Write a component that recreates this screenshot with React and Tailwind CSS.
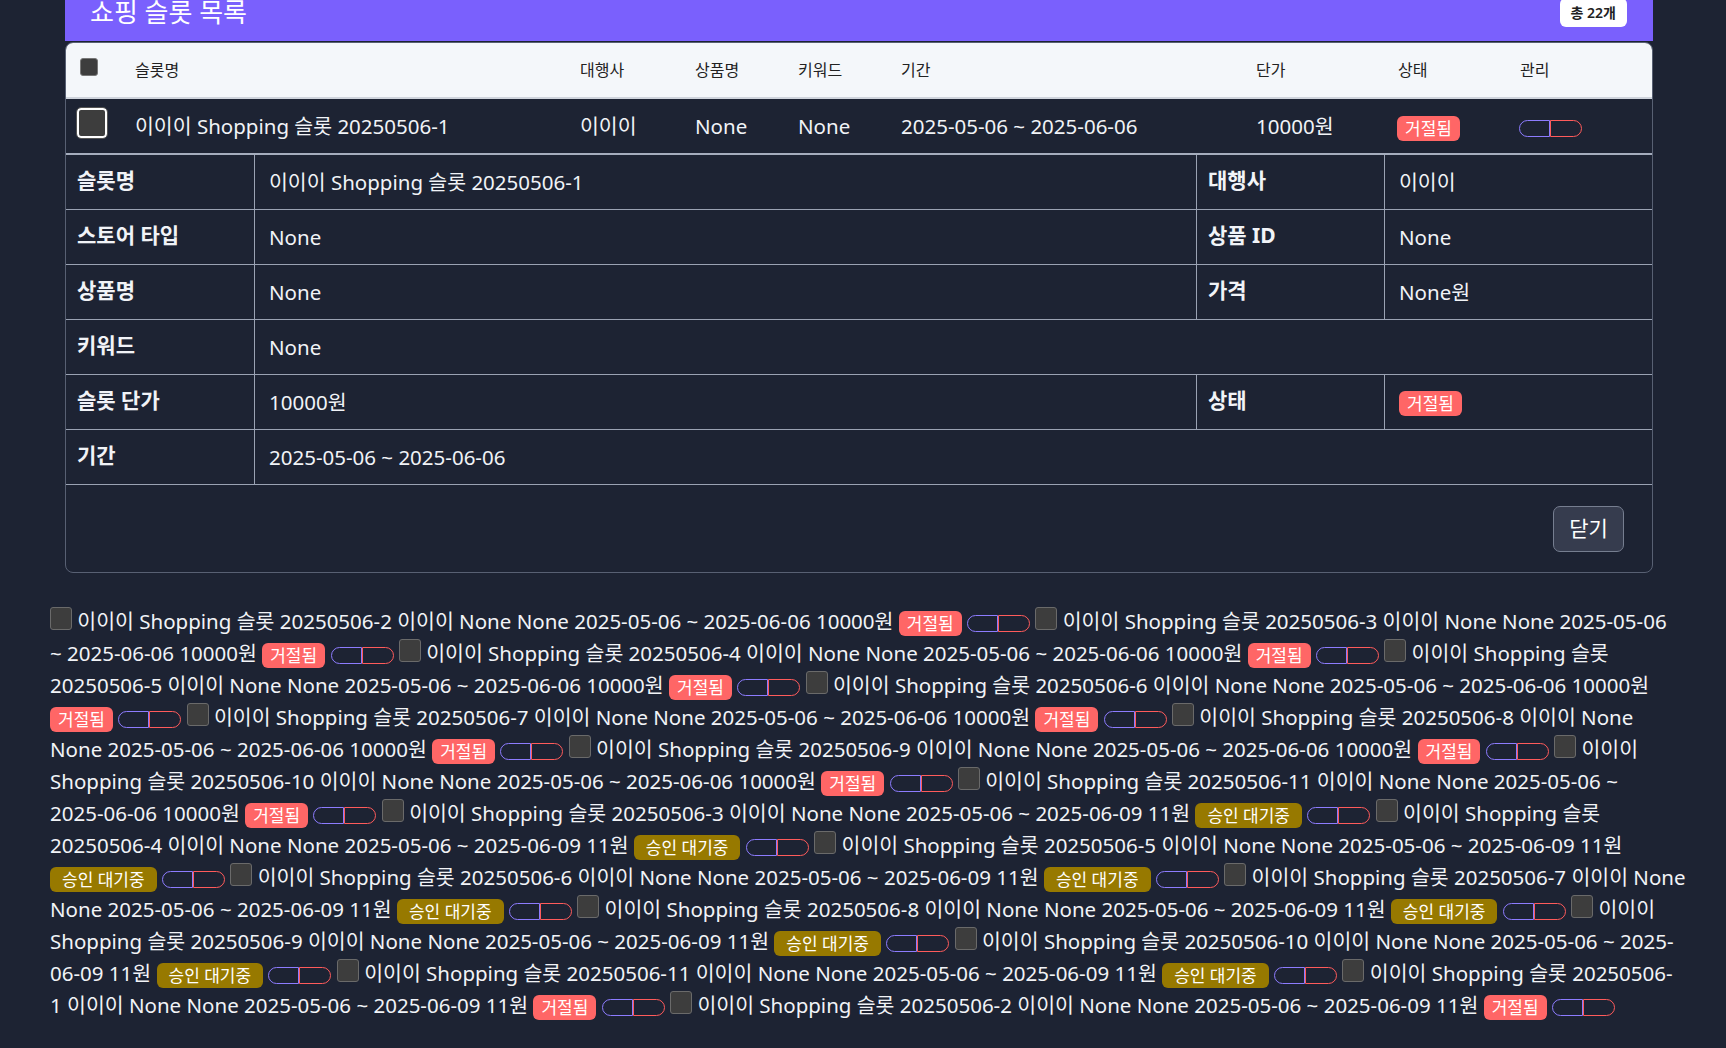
import { Fragment } from 'react';

const FONT = "font-['Noto_Sans','Noto_Sans_CJK_KR',sans-serif]";

const cols = 'grid grid-cols-[54px_445px_115px_103px_103px_355px_142px_122px_149px]';

// 테이블 밖으로 흘러나온 나머지 행들 (줄 단위)
const lines = [
  [['cb'], ['t', '이이이 Shopping 슬롯 20250506-2 이이이 None None 2025-05-06 ~ 2025-06-06 10000원'], ['rej'], ['tog'], ['cb'], ['t', '이이이 Shopping 슬롯 20250506-3 이이이 None None 2025-05-06']],
  [['t', '~ 2025-06-06 10000원'], ['rej'], ['tog'], ['cb'], ['t', '이이이 Shopping 슬롯 20250506-4 이이이 None None 2025-05-06 ~ 2025-06-06 10000원'], ['rej'], ['tog'], ['cb'], ['t', '이이이 Shopping 슬롯']],
  [['t', '20250506-5 이이이 None None 2025-05-06 ~ 2025-06-06 10000원'], ['rej'], ['tog'], ['cb'], ['t', '이이이 Shopping 슬롯 20250506-6 이이이 None None 2025-05-06 ~ 2025-06-06 10000원']],
  [['rej'], ['tog'], ['cb'], ['t', '이이이 Shopping 슬롯 20250506-7 이이이 None None 2025-05-06 ~ 2025-06-06 10000원'], ['rej'], ['tog'], ['cb'], ['t', '이이이 Shopping 슬롯 20250506-8 이이이 None']],
  [['t', 'None 2025-05-06 ~ 2025-06-06 10000원'], ['rej'], ['tog'], ['cb'], ['t', '이이이 Shopping 슬롯 20250506-9 이이이 None None 2025-05-06 ~ 2025-06-06 10000원'], ['rej'], ['tog'], ['cb'], ['t', '이이이']],
  [['t', 'Shopping 슬롯 20250506-10 이이이 None None 2025-05-06 ~ 2025-06-06 10000원'], ['rej'], ['tog'], ['cb'], ['t', '이이이 Shopping 슬롯 20250506-11 이이이 None None 2025-05-06 ~']],
  [['t', '2025-06-06 10000원'], ['rej'], ['tog'], ['cb'], ['t', '이이이 Shopping 슬롯 20250506-3 이이이 None None 2025-05-06 ~ 2025-06-09 11원'], ['wait'], ['tog'], ['cb'], ['t', '이이이 Shopping 슬롯']],
  [['t', '20250506-4 이이이 None None 2025-05-06 ~ 2025-06-09 11원'], ['wait'], ['tog'], ['cb'], ['t', '이이이 Shopping 슬롯 20250506-5 이이이 None None 2025-05-06 ~ 2025-06-09 11원']],
  [['wait'], ['tog'], ['cb'], ['t', '이이이 Shopping 슬롯 20250506-6 이이이 None None 2025-05-06 ~ 2025-06-09 11원'], ['wait'], ['tog'], ['cb'], ['t', '이이이 Shopping 슬롯 20250506-7 이이이 None']],
  [['t', 'None 2025-05-06 ~ 2025-06-09 11원'], ['wait'], ['tog'], ['cb'], ['t', '이이이 Shopping 슬롯 20250506-8 이이이 None None 2025-05-06 ~ 2025-06-09 11원'], ['wait'], ['tog'], ['cb'], ['t', '이이이']],
  [['t', 'Shopping 슬롯 20250506-9 이이이 None None 2025-05-06 ~ 2025-06-09 11원'], ['wait'], ['tog'], ['cb'], ['t', '이이이 Shopping 슬롯 20250506-10 이이이 None None 2025-05-06 ~ 2025-']],
  [['t', '06-09 11원'], ['wait'], ['tog'], ['cb'], ['t', '이이이 Shopping 슬롯 20250506-11 이이이 None None 2025-05-06 ~ 2025-06-09 11원'], ['wait'], ['tog'], ['cb'], ['t', '이이이 Shopping 슬롯 20250506-']],
  [['t', '1 이이이 None None 2025-05-06 ~ 2025-06-09 11원'], ['rej'], ['tog'], ['cb'], ['t', '이이이 Shopping 슬롯 20250506-2 이이이 None None 2025-05-06 ~ 2025-06-09 11원'], ['rej'], ['tog']],
];

function Toggle() {
  return (
    <span className="inline-flex align-middle">
      <span className="w-[31px] h-[17px] border border-[#8d7cff] rounded-l-full" />
      <span className="w-[32px] h-[17px] border border-[#ff5b5b] rounded-r-full" />
    </span>
  );
}

function Badge({ kind, className = '' }) {
  if (kind === 'wait') {
    return <span className={`inline-block align-middle bg-[#977900] text-white text-[17px] leading-[25px] px-[12px] rounded-[6px] ${className}`}>승인 대기중</span>;
  }
  return <span className={`inline-block align-middle bg-[#ff6666] text-white text-[17px] leading-[25px] px-[8px] rounded-[6px] ${className}`}>거절됨</span>;
}

function InlineBox() {
  return <span className="inline-block align-baseline w-[22px] h-[23px] bg-[#3d3d3d] border-[1.5px] border-[#6a6a6a] rounded-[3px] translate-y-[1px]" />;
}

function Piece({ p, last }) {
  const sp = last ? '' : ' ';
  if (p[0] === 't') return <>{p[1]}{sp}</>;
  if (p[0] === 'cb') return <><InlineBox />{sp}</>;
  if (p[0] === 'tog') return <><Toggle />{sp}</>;
  return <><Badge kind={p[0]} />{sp}</>;
}

function DetailLabel({ children }) {
  return <div className="px-[11px] pt-[12px] font-bold text-[21px] leading-[26px] border-r border-[#9aa2b3]">{children}</div>;
}

function DetailValue({ children, border = true }) {
  return <div className={`px-[14px] flex items-center text-[20.5px] ${border ? 'border-r border-[#9aa2b3]' : ''}`}>{children}</div>;
}

export default function App() {
  return (
    <div className={`min-h-screen bg-[#1d2333] text-[#f1f3f7] px-[50px] overflow-hidden ${FONT}`}>
      <div className="ml-[15px] mr-[23px] -mt-[27px]">
        {/* 헤더 */}
        <div className="h-[68px] bg-[#7a60fd] flex items-center justify-between pt-[10px] pl-[25px] pr-[26px]">
          <h2 className="text-[26px] leading-9 text-white">쇼핑 슬롯 목록</h2>
          <span className="bg-white text-[#222] text-[14px] font-semibold px-[11px] py-[4px] rounded-md">총 22개</span>
        </div>

        <div className="mt-px border border-[#586073] rounded-lg overflow-hidden">
          {/* 테이블 헤더 */}
          <div className={`${cols} h-[56px] bg-[#f4f7fa] text-[#222] text-[16px] items-center border-b-2 border-[#cfd4dc]`}>
            <div className="pl-[14px]">
              <span className="block w-[18px] h-[18px] bg-[#3d3d3d] border border-[#777] rounded-[3px] -mt-[6px]" />
            </div>
            {['슬롯명', '대행사', '상품명', '키워드', '기간', '단가', '상태', '관리'].map((h) => (
              <div key={h} className="pl-[15px]">{h}</div>
            ))}
          </div>

          {/* 선택된 행 */}
          <div className={`${cols} h-[56px] items-center text-[20.5px] border-b-2 border-[#a5adbd]`}>
            <div className="pl-[11px]">
              <span className="block w-[30px] h-[30px] bg-[#3d3d3d] border-2 border-white rounded-[4px] outline outline-1 outline-[#555] -mt-[6px]" />
            </div>
            <div className="pl-[15px]">이이이 Shopping 슬롯 20250506-1</div>
            <div className="pl-[15px]">이이이</div>
            <div className="pl-[15px]">None</div>
            <div className="pl-[15px]">None</div>
            <div className="pl-[15px]">2025-05-06 ~ 2025-06-06</div>
            <div className="pl-[15px]">10000원</div>
            <div className="pl-[14px]"><Badge kind="rej" /></div>
            <div className="pl-[14px]"><Toggle /></div>
          </div>

          {/* 상세 정보 */}
          <div className="grid grid-cols-[189px_942px_188px_1fr] auto-rows-[55px] [&>div]:border-b [&>div]:border-[#9aa2b3]">
            <DetailLabel>슬롯명</DetailLabel>
            <DetailValue>이이이 Shopping 슬롯 20250506-1</DetailValue>
            <DetailLabel>대행사</DetailLabel>
            <DetailValue border={false}>이이이</DetailValue>

            <DetailLabel>스토어 타입</DetailLabel>
            <DetailValue>None</DetailValue>
            <DetailLabel>상품 ID</DetailLabel>
            <DetailValue border={false}>None</DetailValue>

            <DetailLabel>상품명</DetailLabel>
            <DetailValue>None</DetailValue>
            <DetailLabel>가격</DetailLabel>
            <DetailValue border={false}>None원</DetailValue>

            <DetailLabel>키워드</DetailLabel>
            <div className="col-span-3 px-[14px] flex items-center text-[20.5px]">None</div>

            <DetailLabel>슬롯 단가</DetailLabel>
            <DetailValue>10000원</DetailValue>
            <DetailLabel>상태</DetailLabel>
            <DetailValue border={false}><Badge kind="rej" className="mt-[2px]" /></DetailValue>

            <DetailLabel>기간</DetailLabel>
            <div className="col-span-3 px-[14px] flex items-center text-[20.5px]">2025-05-06 ~ 2025-06-06</div>
          </div>

          {/* 푸터 */}
          <div className="flex justify-end pt-[21px] pb-[20px] pr-[28px]">
            <button className="w-[71px] h-[46px] bg-[#363c4e] border border-[#767e90] rounded-[7px] text-[21px] text-white">닫기</button>
          </div>
        </div>
      </div>

      <div className="mt-[32px] text-[20.5px] leading-[32px] text-[#f1f3f7] pb-8">
        {lines.map((line, i) => (
          <div key={i} className="whitespace-nowrap h-[32px]">
            {line.map((p, j) => (
              <Piece key={j} p={p} last={j === line.length - 1} />
            ))}
          </div>
        ))}
      </div>
    </div>
  );
}
